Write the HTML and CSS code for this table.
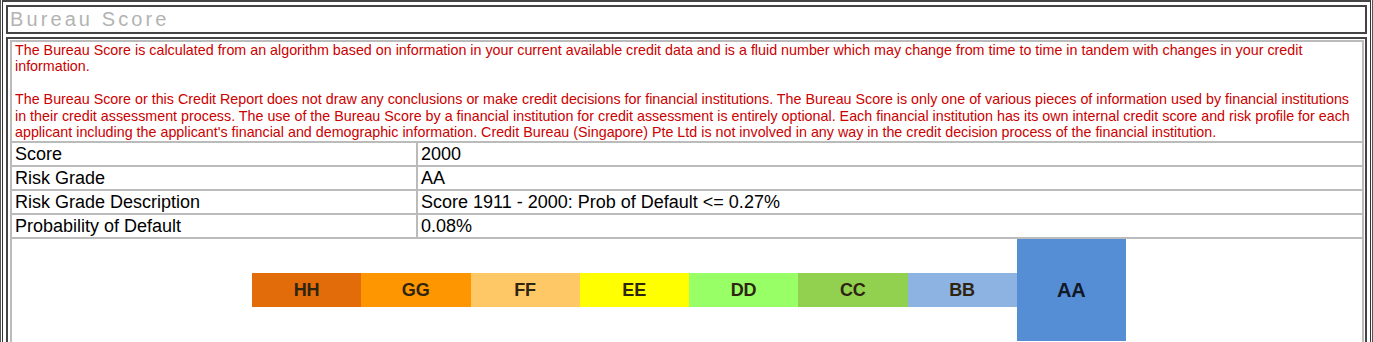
FILE: index.html
```html
<!DOCTYPE html>
<html>
<head>
<meta charset="utf-8">
<title>Bureau Score</title>
<link rel="stylesheet" href="styles.css">
</head>
<body>
<div class="frame">
  <div class="cell">
    <div class="title-box">Bureau Score</div>
    <div class="content-box">
      <div class="inner">
        <div class="notice">The Bureau Score is calculated from an algorithm based on information in your current available credit data and is a fluid number which may change from time to time in tandem with changes in your credit information.<br><br>The Bureau Score or this Credit Report does not draw any conclusions or make credit decisions for financial institutions. The Bureau Score is only one of various pieces of information used by financial institutions in their credit assessment process. The use of the Bureau Score by a financial institution for credit assessment is entirely optional. Each financial institution has its own internal credit score and risk profile for each applicant including the applicant's financial and demographic information. Credit Bureau (Singapore) Pte Ltd is not involved in any way in the credit decision process of the financial institution.</div>
        <div class="row"><div class="label">Score</div><div class="value">2000</div></div>
        <div class="row"><div class="label">Risk Grade</div><div class="value">AA</div></div>
        <div class="row"><div class="label">Risk Grade Description</div><div class="value">Score 1911 - 2000: Prob of Default &lt;= 0.27%</div></div>
        <div class="row"><div class="label">Probability of Default</div><div class="value">0.08%</div></div>
        <div class="chart-row">
          <div class="grades">
            <div class="grade g-hh">HH</div>
            <div class="grade g-gg">GG</div>
            <div class="grade g-ff">FF</div>
            <div class="grade g-ee">EE</div>
            <div class="grade g-dd">DD</div>
            <div class="grade g-cc">CC</div>
            <div class="grade g-bb">BB</div>
            <div class="grade g-aa active">AA</div>
          </div>
        </div>
      </div>
    </div>
  </div>
</div>
</body>
</html>
```
FILE: styles.css
```css
html, body {
  margin: 0;
  padding: 0;
  background: #fff;
  overflow: hidden;
}
body {
  font-family: "Liberation Sans", Arial, sans-serif;
  color: #000;
}
.frame {
  border-left: 1px solid #555;
  border-right: 1px solid #555;
  padding: 0 1px;
  height: 342px;
  box-sizing: border-box;
  overflow: hidden;
}
.cell {
  border-left: 1px solid #333;
  border-right: 1px solid #333;
  border-top: 2px solid #444;
  padding: 3px 3px 0;
  height: 100%;
  box-sizing: border-box;
}
.title-box {
  border: 2px solid #444;
  height: 25px;
  line-height: 25px;
  padding-left: 2px;
  font-size: 20px;
  letter-spacing: 3.1px;
  color: #b3b3b3;
  margin-bottom: 3px;
}
.content-box {
  border: 2px solid #444;
  border-bottom: none;
  padding: 1px 1px 0 2px;
  height: 320px;
}
.inner {
  border: 2px solid #bbb;
  border-bottom: none;
  height: 320px;
}
.notice {
  color: #cc0000;
  font-size: 14.3px;
  line-height: 16.4px;
  padding: 0 3px 0.6px;
}
.row {
  display: flex;
  border-top: 2px solid #bbb;
  height: 22px;
  font-size: 18px;
  line-height: 22px;
}
.label {
  width: 401px;
  padding-left: 3px;
}
.value {
  flex: 1;
  border-left: 2px solid #bbb;
  padding-left: 3px;
}
.chart-row {
  border-top: 2px solid #bbb;
  padding-left: 240px;
}
.grades {
  display: flex;
  align-items: center;
  height: 102px;
}
.grade {
  width: 109.25px;
  height: 34px;
  line-height: 34px;
  text-align: center;
  font-weight: bold;
  font-size: 18px;
  color: #2e2410;
  flex: none;
}
.g-hh { background: #e36c0a; }
.g-gg { background: #fd9600; }
.g-ff { background: #ffc866; }
.g-ee { background: #ffff00; }
.g-dd { background: #99ff66; }
.g-cc { background: #92d050; }
.g-bb { background: #8db3e2; }
.g-aa { background: #558ed5; }
.grade.active {
  height: 102px;
  line-height: 102px;
  font-size: 20px;
  color: #111827;
}
```
